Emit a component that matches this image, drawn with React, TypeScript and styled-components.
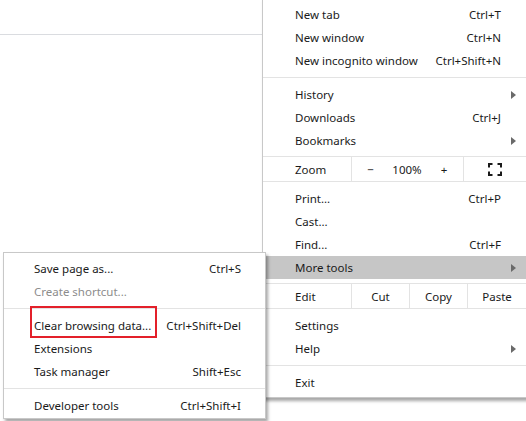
import styled, { createGlobalStyle } from "styled-components";

const GlobalStyle = createGlobalStyle`
  html, body {
    margin: 0;
    padding: 0;
    background: #fff;
  }
  body {
    font-family: "Noto Sans", "Open Sans", sans-serif;
    font-size: 11.5px;
    color: #1a1a1a;
  }
`;

const Page = styled.div`
  position: relative;
  width: 526px;
  height: 421px;
  overflow: hidden;
  background: #fff;
`;

const Toolbar = styled.div`
  height: 34px;
  border-bottom: 1px solid #dadce0;
`;

const Menu = styled.div<{ $left: number; $top: number; $width: number; $pad: string }>`
  position: absolute;
  left: ${(p) => p.$left}px;
  top: ${(p) => p.$top}px;
  width: ${(p) => p.$width}px;
  box-sizing: border-box;
  padding: ${(p) => p.$pad};
  background: #fff;
  border: 1px solid #c8c8c8;
  box-shadow: 2px 3px 3px rgba(0, 0, 0, 0.35);
`;

const Item = styled.div<{ $indent: number; $arrowCol: number; $active?: boolean; $disabled?: boolean }>`
  display: grid;
  grid-template-columns: 1fr auto ${(p) => p.$arrowCol}px;
  align-items: center;
  height: 23px;
  padding-left: ${(p) => p.$indent}px;
  background: ${(p) => (p.$active ? "#c6c6c6" : "transparent")};
  color: ${(p) => (p.$disabled ? "#8c8c8c" : "#1a1a1a")};
  white-space: nowrap;
`;

const Shortcut = styled.span`
  text-align: right;
`;

const ArrowCell = styled.span`
  display: flex;
  justify-content: center;
  align-items: center;
`;

const Arrow = styled.span`
  width: 0;
  height: 0;
  border-top: 4px solid transparent;
  border-bottom: 4px solid transparent;
  border-left: 5px solid #6a6a6a;
`;

const Separator = styled.div`
  height: 1px;
  margin: 5px 0;
  background: #e3e3e3;
`;

const CellRow = styled.div`
  display: flex;
  height: 24px;
  margin: 4px 0 5px;
  border-top: 1px solid #e3e3e3;
  border-bottom: 1px solid #e3e3e3;
`;

const LabelCell = styled.div`
  width: 88px;
  box-sizing: border-box;
  padding-left: 32px;
  display: flex;
  align-items: center;
`;

const Cell = styled.div<{ $w: number; $divider?: boolean }>`
  width: ${(p) => p.$w}px;
  display: flex;
  align-items: center;
  justify-content: center;
  border-left: ${(p) => (p.$divider ? "1px solid #e3e3e3" : "none")};
  box-sizing: border-box;
`;

const Highlight = styled.div`
  position: absolute;
  left: 26px;
  top: 53px;
  width: 127px;
  height: 32px;
  box-sizing: border-box;
  border: 2px solid #e3202a;
  pointer-events: none;
`;

type Entry =
  | { kind: "item"; label: string; shortcut?: string; arrow?: boolean; active?: boolean; disabled?: boolean }
  | { kind: "sep" }
  | { kind: "zoom" }
  | { kind: "edit" };

const mainEntries: Entry[] = [
  { kind: "item", label: "New tab", shortcut: "Ctrl+T" },
  { kind: "item", label: "New window", shortcut: "Ctrl+N" },
  { kind: "item", label: "New incognito window", shortcut: "Ctrl+Shift+N" },
  { kind: "sep" },
  { kind: "item", label: "History", arrow: true },
  { kind: "item", label: "Downloads", shortcut: "Ctrl+J" },
  { kind: "item", label: "Bookmarks", arrow: true },
  { kind: "zoom" },
  { kind: "item", label: "Print...", shortcut: "Ctrl+P" },
  { kind: "item", label: "Cast..." },
  { kind: "item", label: "Find...", shortcut: "Ctrl+F" },
  { kind: "item", label: "More tools", arrow: true, active: true },
  { kind: "edit" },
  { kind: "item", label: "Settings" },
  { kind: "item", label: "Help", arrow: true },
  { kind: "sep" },
  { kind: "item", label: "Exit" },
];

const subEntries: Entry[] = [
  { kind: "item", label: "Save page as...", shortcut: "Ctrl+S" },
  { kind: "item", label: "Create shortcut...", disabled: true },
  { kind: "sep" },
  { kind: "item", label: "Clear browsing data...", shortcut: "Ctrl+Shift+Del" },
  { kind: "item", label: "Extensions" },
  { kind: "item", label: "Task manager", shortcut: "Shift+Esc" },
  { kind: "sep" },
  { kind: "item", label: "Developer tools", shortcut: "Ctrl+Shift+I" },
];

const FullscreenIcon = () => (
  <svg width="14" height="13" viewBox="0 0 14 13" fill="none" stroke="#1a1a1a" strokeWidth="2">
    <path d="M1 4.5V1h3.5M9.5 1H13v3.5M13 8.5V12H9.5M4.5 12H1V8.5" />
  </svg>
);

const ZoomRow = () => (
  <CellRow>
    <LabelCell>Zoom</LabelCell>
    <Cell $w={38} $divider>−</Cell>
    <Cell $w={36}>100%</Cell>
    <Cell $w={38}>+</Cell>
    <Cell $w={63} $divider>
      <FullscreenIcon />
    </Cell>
  </CellRow>
);

const EditRow = () => (
  <CellRow>
    <LabelCell>Edit</LabelCell>
    <Cell $w={58} $divider>Cut</Cell>
    <Cell $w={58} $divider>Copy</Cell>
    <Cell $w={59} $divider>Paste</Cell>
  </CellRow>
);

const renderEntries = (entries: Entry[], indent: number, arrowCol: number) =>
  entries.map((e, i) => {
    if (e.kind === "sep") return <Separator key={i} />;
    if (e.kind === "zoom") return <ZoomRow key={i} />;
    if (e.kind === "edit") return <EditRow key={i} />;
    return (
      <Item key={i} $indent={indent} $arrowCol={arrowCol} $active={e.active} $disabled={e.disabled}>
        <span>{e.label}</span>
        <Shortcut>{e.shortcut}</Shortcut>
        <ArrowCell>{e.arrow && <Arrow />}</ArrowCell>
      </Item>
    );
  });

export default function App() {
  return (
    <>
      <GlobalStyle />
      <Page>
        <Toolbar />
        <Menu $left={262} $top={-2} $width={265} $pad="4px 0 3px">
          {renderEntries(mainEntries, 32, 25)}
        </Menu>
        <Menu $left={3} $top={252} $width={263} $pad="4px 0 1px">
          {renderEntries(subEntries, 30, 24)}
          <Highlight />
        </Menu>
      </Page>
    </>
  );
}
